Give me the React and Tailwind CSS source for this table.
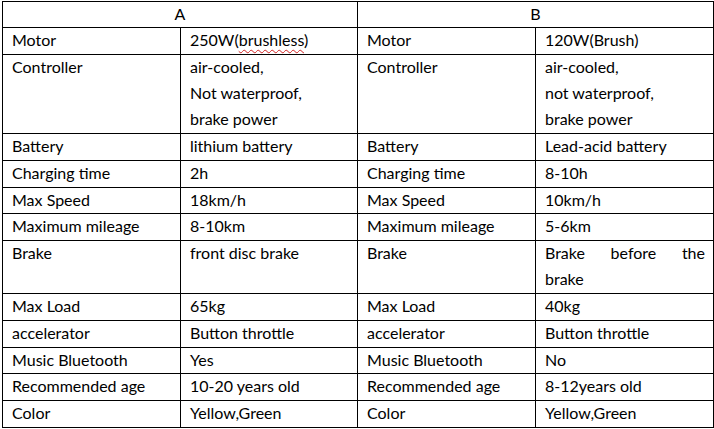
import React from "react";

const rows = [
  { h: 26, a: ["Motor"], b: "brushless", c: ["Motor"], d: ["120W(Brush)"] },
  { h: 78, a: ["Controller"], b: ["air-cooled,", "Not waterproof,", "brake power"], c: ["Controller"], d: ["air-cooled,", "not waterproof,", "brake power"] },
  { h: 26, a: ["Battery"], b: ["lithium battery"], c: ["Battery"], d: ["Lead-acid battery"] },
  { h: 26, a: ["Charging time"], b: ["2h"], c: ["Charging time"], d: ["8-10h"] },
  { h: 25, a: ["Max Speed"], b: ["18km/h"], c: ["Max Speed"], d: ["10km/h"] },
  { h: 26, a: ["Maximum mileage"], b: ["8-10km"], c: ["Maximum mileage"], d: ["5-6km"] },
  { h: 52, a: ["Brake"], b: ["front disc brake"], c: ["Brake"], d: "justify" },
  { h: 26, a: ["Max Load"], b: ["65kg"], c: ["Max Load"], d: ["40kg"] },
  { h: 26, a: ["accelerator"], b: ["Button throttle"], c: ["accelerator"], d: ["Button throttle"] },
  { h: 25, a: ["Music Bluetooth"], b: ["Yes"], c: ["Music Bluetooth"], d: ["No"] },
  { h: 26, a: ["Recommended age"], b: ["10-20 years old"], c: ["Recommended age"], d: ["8-12years old"] },
  { h: 26, a: ["Color"], b: ["Yellow,Green"], c: ["Color"], d: ["Yellow,Green"] },
];

function Cell({ content, h }) {
  let inner;
  if (content === "brushless") {
    inner = (
      <div>
        250W(<span className="underline decoration-wavy decoration-[#d02020] decoration-1 underline-offset-[3px]">brushless</span>)
      </div>
    );
  } else if (content === "justify") {
    inner = (
      <>
        <div className="flex justify-between">
          <span>Brake</span>
          <span>before</span>
          <span>the</span>
        </div>
        <div>brake</div>
      </>
    );
  } else {
    inner = content.map((t, i) => <div key={i}>{t}</div>);
  }
  return (
    <div className="bg-white pl-[9px] pr-[8px] leading-[26px] -mt-0" style={{ height: h }}>
      <div className="-mt-[1px]">{inner}</div>
    </div>
  );
}

export default function App() {
  return (
    <div className="w-[714px] h-[429px] bg-white pt-px pl-[2px]">
      <div
        className="w-[712px] grid grid-cols-[177px_176px_177px_177px] gap-px bg-black p-px text-black text-[16px]"
        style={{ fontFamily: "Lato, 'Open Sans', sans-serif" }}
      >
        <div className="col-span-2 bg-white h-[25px] leading-[24px] text-center">A</div>
        <div className="col-span-2 bg-white h-[25px] leading-[24px] text-center">B</div>
        {rows.map((r, i) => (
          <React.Fragment key={i}>
            <Cell content={r.a} h={r.h} />
            <Cell content={r.b} h={r.h} />
            <Cell content={r.c} h={r.h} />
            <Cell content={r.d} h={r.h} />
          </React.Fragment>
        ))}
      </div>
    </div>
  );
}
